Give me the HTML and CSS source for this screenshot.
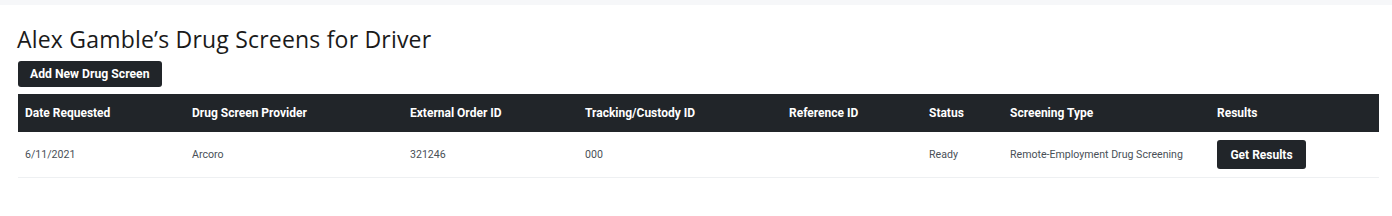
FILE: index.html
```html
<!DOCTYPE html>
<html>

<head>
    <title>Drug Screens</title>
    <link rel="stylesheet" href="styles.css">
</head>

<body>
    <div class="topbar"></div>
    <div class="page">
        <h1>Alex Gamble’s Drug Screens for Driver</h1>
        <button class="btn">Add New Drug Screen</button>
        <table class="screens">
            <thead>
                <tr>
                    <th class="c-date">Date Requested</th>
                    <th class="c-prov">Drug Screen Provider</th>
                    <th class="c-ext">External Order ID</th>
                    <th class="c-track">Tracking/Custody ID</th>
                    <th class="c-ref">Reference ID</th>
                    <th class="c-status">Status</th>
                    <th class="c-type">Screening Type</th>
                    <th class="c-res">Results</th>
                </tr>
            </thead>
            <tbody>
                <tr>
                    <td>6/11/2021</td>
                    <td>Arcoro</td>
                    <td>321246</td>
                    <td>000</td>
                    <td></td>
                    <td>Ready</td>
                    <td>Remote-Employment Drug Screening</td>
                    <td><button class="btn btn-results">Get Results</button></td>
                </tr>
            </tbody>
        </table>
    </div>
</body>

</html>
```

FILE: styles.css
```css
body {
    margin: 0;
    font-family: Roboto, "Liberation Sans", sans-serif;
    color: #212529;
    background-color: #fff;
}

.topbar {
    height: 5px;
    background-color: #f6f7f9;
}

.page {
    padding: 0 13px 0 18px;
}

h1 {
    font-family: "Open Sans", "Noto Sans", sans-serif;
    font-weight: 400;
    font-size: 23px;
    letter-spacing: 0.2px;
    margin: 19px 0 7px -1px;
    line-height: 30px;
    color: #1a1a1a;
}

.btn {
    font-family: Roboto, "Liberation Sans", sans-serif;
    font-weight: 700;
    font-size: 12.2px;
    color: #fff;
    background-color: #212529;
    border: none;
    border-radius: 3px;
    height: 26px;
    padding: 0 12px;
    cursor: pointer;
    display: block;
}

.screens {
    width: 100%;
    margin-top: 7px;
    border-collapse: collapse;
    font-size: 10.6px;
}

.screens th {
    background-color: #212529;
    color: #fff;
    text-align: left;
    font-weight: 700;
    font-size: 12px;
    height: 38px;
    padding: 0 7px;
}

.screens td {
    color: #495057;
    height: 45px;
    padding: 0 7px;
    border-bottom: 1px solid #eef0f2;
}

.c-date { width: 153px; }
.c-prov { width: 204px; }
.c-ext { width: 161px; }
.c-track { width: 190px; }
.c-ref { width: 126px; }
.c-status { width: 67px; }
.c-type { width: 193px; }

.btn-results {
    height: 29px;
    width: 89px;
    padding: 0;
    font-size: 12px;
}
```
